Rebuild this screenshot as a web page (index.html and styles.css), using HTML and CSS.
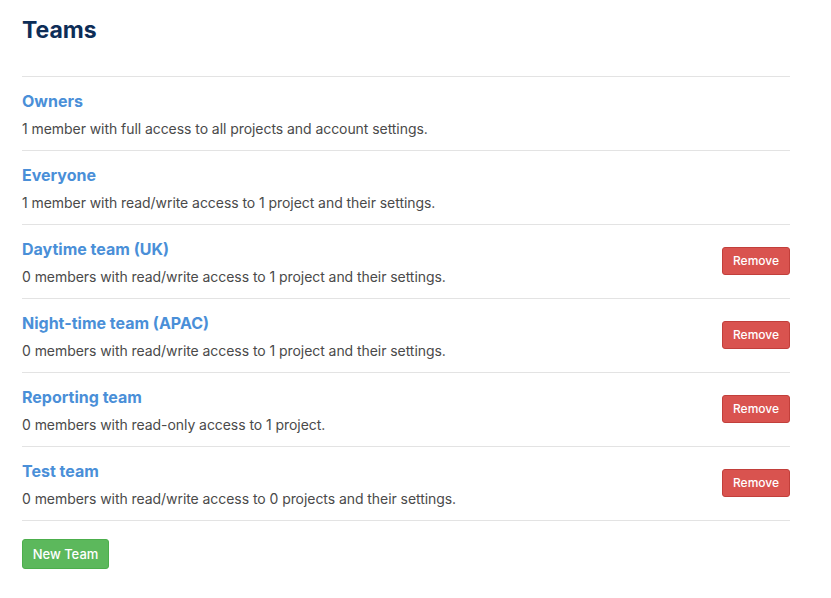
FILE: index.html
```html
<!DOCTYPE html>
<html>
<head>
<meta charset="utf-8">
<link rel="stylesheet" href="styles.css">
</head>
<body>
<div class="page">
  <h1 class="title">Teams</h1>
  <ul class="teams">
    <li class="team">
      <div class="info">
        <a class="name" href="#">Owners</a>
        <p class="desc">1 member with full access to all projects and account settings.</p>
      </div>
    </li>
    <li class="team">
      <div class="info">
        <a class="name" href="#">Everyone</a>
        <p class="desc">1 member with read/write access to 1 project and their settings.</p>
      </div>
    </li>
    <li class="team">
      <div class="info">
        <a class="name" href="#">Daytime team (UK)</a>
        <p class="desc">0 members with read/write access to 1 project and their settings.</p>
      </div>
      <button class="btn btn-remove">Remove</button>
    </li>
    <li class="team">
      <div class="info">
        <a class="name" href="#">Night-time team (APAC)</a>
        <p class="desc">0 members with read/write access to 1 project and their settings.</p>
      </div>
      <button class="btn btn-remove">Remove</button>
    </li>
    <li class="team">
      <div class="info">
        <a class="name" href="#">Reporting team</a>
        <p class="desc">0 members with read-only access to 1 project.</p>
      </div>
      <button class="btn btn-remove">Remove</button>
    </li>
    <li class="team">
      <div class="info">
        <a class="name" href="#">Test team</a>
        <p class="desc">0 members with read/write access to 0 projects and their settings.</p>
      </div>
      <button class="btn btn-remove">Remove</button>
    </li>
  </ul>
  <button class="btn btn-new">New Team</button>
</div>
</body>
</html>
```
FILE: styles.css
```css
html, body {
  margin: 0;
  padding: 0;
  background: #ffffff;
}
body {
  font-family: Inter, "Liberation Sans", Arial, sans-serif;
  color: #4a4a4a;
}
.page {
  width: 768px;
  padding: 16px 0 0 22px;
}
.title {
  margin: 0;
  font-size: 23px;
  line-height: 28px;
  font-weight: 700;
  color: #0d2d57;
  padding-bottom: 32px;
  border-bottom: 1px solid #e3e3e3;
}
.teams {
  list-style: none;
  margin: 0;
  padding: 0;
}
.team {
  display: flex;
  align-items: center;
  justify-content: space-between;
  height: 73px;
  border-bottom: 1px solid #e3e3e3;
}
.info {
  display: flex;
  flex-direction: column;
  padding-top: 1px;
}
.name {
  font-size: 16px;
  font-weight: 700;
  line-height: 20px;
  color: #4a8fd8;
  text-decoration: none;
}
.desc {
  margin: 9px 0 0 0;
  font-size: 14px;
  line-height: 18px;
  letter-spacing: -0.06px;
  color: #4a4a4a;
}
.btn {
  font-family: Inter, "Liberation Sans", Arial, sans-serif;
  font-weight: 500;
  color: #ffffff;
  border-radius: 3px;
  cursor: pointer;
}
.btn-remove {
  width: 68px;
  height: 28px;
  margin-bottom: 2px;
  font-size: 12px;
  background: #d9534f;
  border: 1px solid #c23f3b;
  padding: 0;
}
.btn-new {
  margin-top: 18px;
  width: 87px;
  height: 30px;
  font-size: 13px;
  background: #5cb85c;
  border: 1px solid #4cae4c;
  padding: 0;
}
```
